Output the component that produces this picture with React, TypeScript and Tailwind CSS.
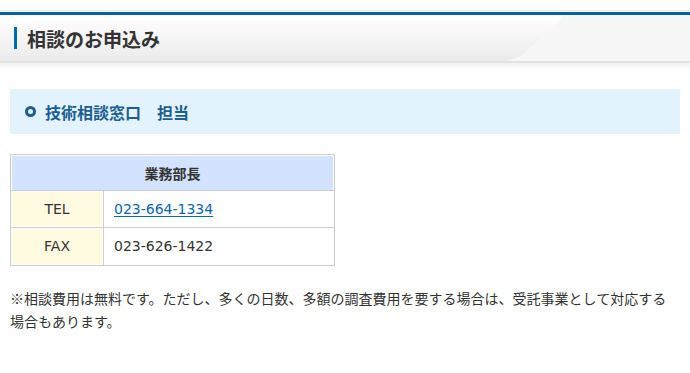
import React from "react";

const rows = [
  { label: "TEL", value: "023-664-1334", link: true },
  { label: "FAX", value: "023-626-1422", link: false },
];

export default function App() {
  return (
    <div className="w-[690px] h-[373px] bg-white text-[#333] font-['Noto_Sans_CJK_JP','Noto_Sans',sans-serif] overflow-hidden">
      {/* page heading */}
      <div className="h-[10px]" />
      <div className="h-px bg-[#ebebeb]" />
      <div className="h-px" />
      <div className="h-[3px] bg-[#0061ae]" />
      <div className="relative h-[48px] bg-gradient-to-b from-white to-[#ebebeb] border-b-2 border-[#e2e2e2] flex items-center pl-[14px]">
        <div className="absolute inset-0 bg-[#f7f7f7] [clip-path:polygon(565px_0,100%_0,100%_100%,507px_100%,522px_88%)]" />
        <span className="relative w-[3px] h-[22px] bg-[#0068b7]" />
        <h2 className="relative ml-[10px] text-[19px] font-bold leading-none text-[#333]">
          相談のお申込み
        </h2>
      </div>
      <div className="h-[6px] bg-gradient-to-b from-[#f1f1f1] to-white" />

      <div className="px-[10px]">
        {/* section heading */}
        <div className="mt-[20px] h-[45px] bg-[#e3f3fe] flex items-center pl-[15px]">
          <span className="w-[11px] h-[11px] rounded-full border-[3px] border-[#1b5f92]" />
          <h3 className="ml-[9px] text-[16px] font-bold leading-none text-[#1b5f92]">
            技術相談窓口　担当
          </h3>
        </div>

        {/* contact table */}
        <div className="mt-[20px] w-[325px] border border-[#cccccc] text-[14px]">
          <div className="h-[36px] p-px pb-0 border-b border-[#cccccc]">
            <div className="h-full bg-[#d3e3fd] flex items-center justify-center font-bold">
              業務部長
            </div>
          </div>
          {rows.map((r, i) => (
            <div
              key={r.label}
              className={`grid grid-cols-[93px_1fr] h-[37px] font-['DejaVu_Sans','Noto_Sans_CJK_JP',sans-serif] text-[14px] ${i < rows.length - 1 ? "border-b border-[#cccccc]" : ""}`}
            >
              <div className="p-px border-r border-[#cccccc]">
                <div className="h-full bg-[#fffbe0] flex items-center justify-center">{r.label}</div>
              </div>
              <div className="flex items-center pl-[10px]">
                {r.link ? (
                  <a href="#" className="text-[#0b67b2] underline underline-offset-2">
                    {r.value}
                  </a>
                ) : (
                  r.value
                )}
              </div>
            </div>
          ))}
        </div>

        <p className="mt-[21px] text-[14px] leading-[23px]">
          ※相談費用は無料です。ただし、多くの日数、多額の調査費用を要する場合は、受託事業として対応する場合もあります。
        </p>
      </div>
    </div>
  );
}
